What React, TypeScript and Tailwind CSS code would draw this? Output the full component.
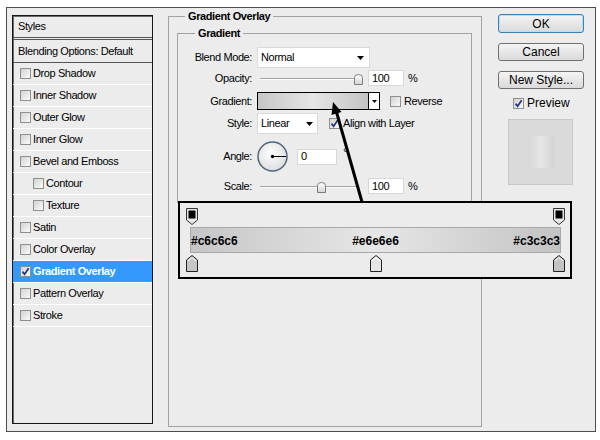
import React from "react";

interface StyleRow {
  name: string;
  sub?: boolean;
  active?: boolean;
}

const styleRows: StyleRow[] = [
  { name: "Drop Shadow" },
  { name: "Inner Shadow" },
  { name: "Outer Glow" },
  { name: "Inner Glow" },
  { name: "Bevel and Emboss" },
  { name: "Contour", sub: true },
  { name: "Texture", sub: true },
  { name: "Satin" },
  { name: "Color Overlay" },
  { name: "Gradient Overlay", active: true },
  { name: "Pattern Overlay" },
  { name: "Stroke" },
];

const Check = ({ checked = false }: { checked?: boolean }) => (
  <span className="flex h-[11px] w-[11px] shrink-0 items-center justify-center border border-[#8e8f8f] bg-linear-to-br from-[#d2d2d2] to-[#fbfbfb]">
    {checked && (
      <svg viewBox="0 0 9 9" className="h-[9px] w-[9px]">
        <path d="M1.5 4.6 L3.6 7.2 L7.6 1.3" fill="none" stroke="#23357e" strokeWidth="1.7" />
      </svg>
    )}
  </span>
);

const DownArrow = () => (
  <svg viewBox="0 0 7 4" className="h-[4px] w-[7px]">
    <path d="M0 0 H7 L3.5 4 Z" fill="#000" />
  </svg>
);

const Thumb = () => (
  <svg viewBox="0 0 9 11" className="h-[11px] w-[9px]">
    <defs>
      <linearGradient id="th" x1="0" x2="0" y1="0" y2="1">
        <stop offset="0" stopColor="#ffffff" />
        <stop offset="1" stopColor="#d4d4d4" />
      </linearGradient>
    </defs>
    <path d="M0.5 10.5 V3.5 Q0.5 0.5 4.5 0.5 Q8.5 0.5 8.5 3.5 V10.5 Z" fill="url(#th)" stroke="#7c7c7c" />
  </svg>
);

const Slider = ({ at }: { at: number }) => (
  <div className="relative h-[16px] w-[108px]">
    <div className="absolute left-[3px] right-[6px] top-[8px] h-[2px] border-t border-b border-t-[#a3a3a3] border-b-white" />
    <div className="absolute top-[4px]" style={{ left: at }}>
      <Thumb />
    </div>
  </div>
);

const Field = ({ value, w }: { value: string; w: string }) => (
  <div className={`flex h-[16px] items-center border border-[#d8d8d8] bg-white pl-[3px] ${w}`}>
    {value}
  </div>
);

const TopStop = () => (
  <svg viewBox="0 0 12 17" className="h-[17px] w-[12px]">
    <path d="M0.5 0.5 H11.5 V12 L6 16.5 L0.5 12 Z" fill="#e8e8e8" stroke="#333" />
    <rect x="2.5" y="2.5" width="7" height="8" fill="#000" />
  </svg>
);

const BottomStop = ({ color }: { color: string }) => (
  <svg viewBox="0 0 12 17" className="h-[17px] w-[12px]">
    <path d="M6 0.5 L11.5 5 V16.5 H0.5 V5 Z" fill={color} stroke="#222" />
    <path d="M2 6 L6 2.5 L10 6" fill="none" stroke="#fff" />
  </svg>
);

const Button = ({ label, primary = false, h }: { label: string; primary?: boolean; h: string }) => (
  <div
    className={`flex w-[86px] items-center justify-center rounded-[3px] border bg-linear-to-b from-[#f4f4f4] to-[#dadada] text-[12px] tracking-normal ${h} ${
      primary ? "border-[#3c7fb1] shadow-[inset_0_0_0_1px_#b5e0fa]" : "border-[#707070]"
    }`}
  >
    {label}
  </div>
);

export default function App() {
  return (
    <div className="relative h-[440px] w-[600px] bg-white pl-[6px] pt-[7px] font-['Liberation_Sans',Arial,sans-serif] text-[11px] tracking-[-0.4px] text-black">
      <div className="flex h-[425px] w-[590px] border border-[#4d4d4d] bg-[#ececec]">
        {/* styles list */}
        <div className="ml-[5px] mt-[7px] flex h-[409px] w-[141px] flex-col border border-[#161616] shadow-[inset_1px_1px_0_#6b6b6b]">
          <div className="flex h-[24px] items-center border-b-[3px] border-double border-[#555] pl-[5px]">Styles</div>
          <div className="flex h-[23px] items-center border-b border-[#555] pl-[5px]">Blending Options: Default</div>
          {styleRows.map((row) => (
            <div
              key={row.name}
              className={`flex h-[22px] items-center border-b border-white ${row.sub ? "pl-[20px]" : "pl-[7px]"} ${
                row.active ? "bg-[#3399ff] font-bold text-white" : ""
              }`}
            >
              <Check checked={row.active} />
              <span className="ml-[2px]">{row.name}</span>
            </div>
          ))}
        </div>

        {/* gradient overlay settings */}
        <fieldset className="ml-[15px] mt-[1px] h-[418px] w-[314px] border border-[#a2a2a2]">
          <legend className="ml-[16px] px-[3px] font-bold leading-[14px]">Gradient Overlay</legend>
          <fieldset className="ml-[8px] mt-[3px] w-[295px] border border-[#a2a2a2]">
            <legend className="ml-[17px] px-[3px] font-bold leading-[14px]">Gradient</legend>

            <div className="mt-[7px] flex h-[21px] items-center">
              <span className="w-[74px] text-right">Blend Mode:</span>
              <div className="ml-[5px] flex h-[21px] w-[113px] items-center justify-between border border-[#dadada] bg-white pl-[3px] pr-[5px]">
                <span>Normal</span>
                <DownArrow />
              </div>
            </div>

            <div className="mt-[2px] flex h-[16px] items-center">
              <span className="w-[74px] text-right">Opacity:</span>
              <div className="ml-[5px]">
                <Slider at={97} />
              </div>
              <div className="ml-[3px]">
                <Field value="100" w="w-[36px]" />
              </div>
              <span className="ml-[4px]">%</span>
            </div>

            <div className="mt-[6px] flex h-[18px] items-center">
              <span className="w-[74px] text-right">Gradient:</span>
              <div className="ml-[5px] flex h-[18px] w-[123px] border border-black">
                <div className="flex-1 bg-[linear-gradient(to_right,#c6c6c6,#e6e6e6,#c3c3c3)]" />
                <div className="flex w-[11px] items-center justify-center border-l border-black bg-white">
                  <svg viewBox="0 0 5 3" className="h-[3px] w-[5px]">
                    <path d="M0 0 H5 L2.5 3 Z" fill="#000" />
                  </svg>
                </div>
              </div>
              <span className="ml-[10px]">
                <Check />
              </span>
              <span className="ml-[3px]">Reverse</span>
            </div>

            <div className="mt-[3px] flex h-[21px] items-center">
              <span className="w-[74px] text-right">Style:</span>
              <div className="ml-[5px] flex h-[21px] w-[61px] items-center justify-between border border-[#dadada] bg-white pl-[3px] pr-[4px]">
                <span>Linear</span>
                <DownArrow />
              </div>
              <span className="ml-[11px]">
                <Check checked />
              </span>
              <span className="ml-[3px]">Align with Layer</span>
            </div>

            <div className="mt-[7px] flex h-[31px] items-center">
              <span className="w-[74px] text-right">Angle:</span>
              <svg viewBox="0 0 31 31" className="ml-[5px] h-[31px] w-[31px]">
                <defs>
                  <radialGradient id="dial" cx="0.45" cy="0.4" r="0.6">
                    <stop offset="0" stopColor="#ffffff" />
                    <stop offset="1" stopColor="#dedede" />
                  </radialGradient>
                </defs>
                <circle cx="15.5" cy="15.5" r="14.5" fill="url(#dial)" stroke="#55627f" strokeWidth="1.5" />
                <line x1="15.5" y1="15.5" x2="29" y2="15.5" stroke="#000" strokeWidth="1" />
                <circle cx="15.5" cy="15.5" r="1.7" fill="#000" />
              </svg>
              <div className="ml-[9px]">
                <Field value="0" w="w-[40px]" />
              </div>
              <span className="ml-[6px] mt-[5px] self-start text-[13px] leading-none">°</span>
            </div>

            <div className="mb-[8px] mt-[6px] flex h-[16px] items-center">
              <span className="w-[74px] text-right">Scale:</span>
              <div className="ml-[5px]">
                <Slider at={60} />
              </div>
              <div className="ml-[3px]">
                <Field value="100" w="w-[36px]" />
              </div>
              <span className="ml-[4px]">%</span>
            </div>
          </fieldset>
        </fieldset>

        {/* buttons */}
        <div className="ml-[16px] mt-[6px] flex w-[86px] flex-col">
          <Button label="OK" primary h="h-[19px]" />
          <div className="mt-[10px]">
            <Button label="Cancel" h="h-[18px]" />
          </div>
          <div className="mt-[10px]">
            <Button label="New Style..." h="h-[18px]" />
          </div>
          <div className="ml-[15px] mt-[8px] flex h-[12px] items-center text-[12px] tracking-normal">
            <Check checked />
            <span className="ml-[3px]">Preview</span>
          </div>
          <div className="ml-[10px] mt-[10px] flex h-[66px] w-[65px] items-center justify-center border border-[#c8c8c8] bg-[#dadada]">
            <div className="h-[32px] w-[26px] bg-[linear-gradient(to_right,#d6d6d6,#e6e6e6,#d4d4d4)]" />
          </div>
        </div>
      </div>

      {/* zoomed gradient callout */}
      <div className="absolute left-[178px] top-[201px] h-[78px] w-[394px] border-2 border-black bg-[#ececec] pl-[6px] pt-[5px]">
        <div className="flex w-[379px] justify-between">
          <TopStop />
          <TopStop />
        </div>
        <div className="ml-[4px] mt-[2px] flex h-[26px] w-[371px] items-end justify-between border border-[#a8a8a8] bg-[linear-gradient(to_right,#c6c6c6,#e6e6e6,#c3c3c3)] pb-[2px] text-[12px] font-bold tracking-normal">
          <span>#c6c6c6</span>
          <span>#e6e6e6</span>
          <span>#c3c3c3</span>
        </div>
        <div className="mt-[2px] flex w-[379px] justify-between">
          <BottomStop color="#c6c6c6" />
          <BottomStop color="#e6e6e6" />
          <BottomStop color="#c3c3c3" />
        </div>
      </div>

      {/* pointer arrow */}
      <svg className="pointer-events-none absolute left-0 top-0 h-[440px] w-[600px]" viewBox="0 0 600 440">
        <line x1="336.5" y1="112" x2="362" y2="202" stroke="#000" strokeWidth="3" />
        <path d="M333 102 L341.5 112 L331.5 115 Z" fill="#000" />
      </svg>
    </div>
  );
}
